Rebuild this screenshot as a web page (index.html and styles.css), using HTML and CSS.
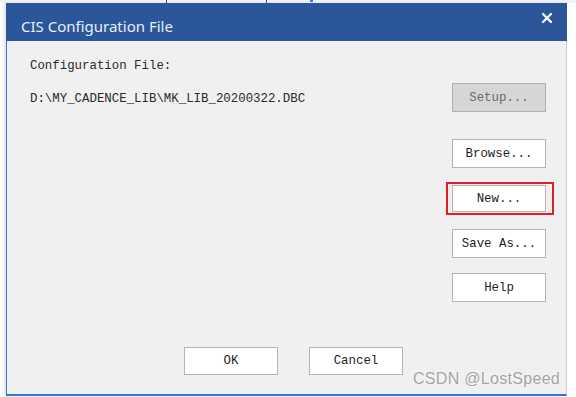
FILE: index.html
```html
<!DOCTYPE html>
<html lang="en">

<head>
    <meta charset="UTF-8">
    <meta name="viewport" content="width=device-width, initial-scale=1.0">
    <title>CIS Configuration File</title>
    <link rel="stylesheet" href="styles.css">
</head>

<body>
    <div class="backdrop"></div>
    <div class="dialog">
        <div class="titlebar">
            <span class="title">CIS Configuration File</span>
            <svg class="close" width="10" height="10" viewBox="0 0 10 10">
                <path d="M1 1 L9 9 M9 1 L1 9" stroke="#ffffff" stroke-width="2.2" stroke-linecap="square"/>
            </svg>
        </div>
        <div class="panel">
            <div class="content">
                <div class="info">
                    <div class="label">Configuration File:</div>
                    <div class="path">D:\MY_CADENCE_LIB\MK_LIB_20200322.DBC</div>
                </div>
                <div class="actions">
                    <button class="btn disabled">Setup...</button>
                    <button class="btn browse">Browse...</button>
                    <div class="marked">
                        <button class="btn">New...</button>
                    </div>
                    <button class="btn">Save As...</button>
                    <button class="btn">Help</button>
                </div>
            </div>
            <div class="footer">
                <button class="btn">OK</button>
                <button class="btn">Cancel</button>
            </div>
        </div>
        <div class="watermark">CSDN @LostSpeed</div>
    </div>
</body>
</html>
```

FILE: styles.css
```css
body {
    margin: 0;
    background-color: #ffffff;
    font-family: "Liberation Mono", monospace;
    height: 397px;
    overflow: hidden;
}

.backdrop {
    height: 3px;
    background:
        linear-gradient(#b02040, #b02040) 166px 0 / 1px 3px no-repeat,
        linear-gradient(#3040e0, #3040e0) 266px 0 / 1px 3px no-repeat,
        linear-gradient(#5070f0, #5070f0) 310px 0 / 3px 2px no-repeat,
        #f2f3f6;
}

.dialog {
    position: relative;
    margin-left: 6px;
    width: 561px;
    height: 393px;
    display: flex;
    flex-direction: column;
    box-shadow: -2px 0 3px rgba(0, 0, 0, 0.12);
}

.titlebar {
    height: 38px;
    background-color: rgb(43, 87, 154);
    display: flex;
    align-items: center;
    justify-content: space-between;
    padding: 0 15px 0 15px;
}

.title {
    font-family: "Noto Sans", sans-serif;
    font-size: 15px;
    color: #e8eef8;
    padding-top: 7px;
}

.close {
    margin-top: -9px;
}

.panel {
    flex: 1;
    background-color: #f0f0f0;
    border-left: 1px solid #2a78d8;
    border-right: 1px solid #c8d0dc;
    border-bottom: 2px solid #2a78d8;
    display: flex;
    flex-direction: column;
}

.content {
    flex: 1;
    display: flex;
    justify-content: space-between;
    padding: 17px 20px 0 23px;
}

.info {
    font-size: 12.4px;
    color: #2a2a2a;
    line-height: 16px;
}

.path {
    margin-top: 17px;
}

.actions {
    display: flex;
    flex-direction: column;
    align-items: flex-end;
    padding-top: 25px;
}

.btn {
    width: 94px;
    height: 29px;
    background-color: #ffffff;
    border: 1px solid #b4b4b4;
    font-family: "Liberation Mono", monospace;
    font-size: 12.4px;
    color: #1e1e1e;
    padding: 0;
}

.btn.disabled {
    background-color: #d6d6d6;
    border-color: #b0b0b0;
    color: #6a6a6a;
}

.browse {
    margin-top: 27px;
}

.marked {
    margin-top: 14px;
    margin-right: -8px;
    border: 2px solid #e21d2a;
    padding: 1px 6px 1px 4px;
    line-height: 0;
}

.marked .btn {
    height: 27px;
}

.actions .marked + .btn {
    margin-top: 14px;
}

.actions .btn + .btn:last-child {
    margin-top: 15px;
}

.footer {
    display: flex;
    justify-content: center;
    gap: 31px;
    padding: 0 0 19px 14px;
}

.footer .btn {
    height: 28px;
}

.watermark {
    position: absolute;
    left: 407px;
    bottom: 8px;
    font-family: "Liberation Sans", Arial, sans-serif;
    font-size: 16px;
    letter-spacing: 0.3px;
    color: #a4a4a4;
    text-shadow: 0 0 2px #ffffff;
}
```
